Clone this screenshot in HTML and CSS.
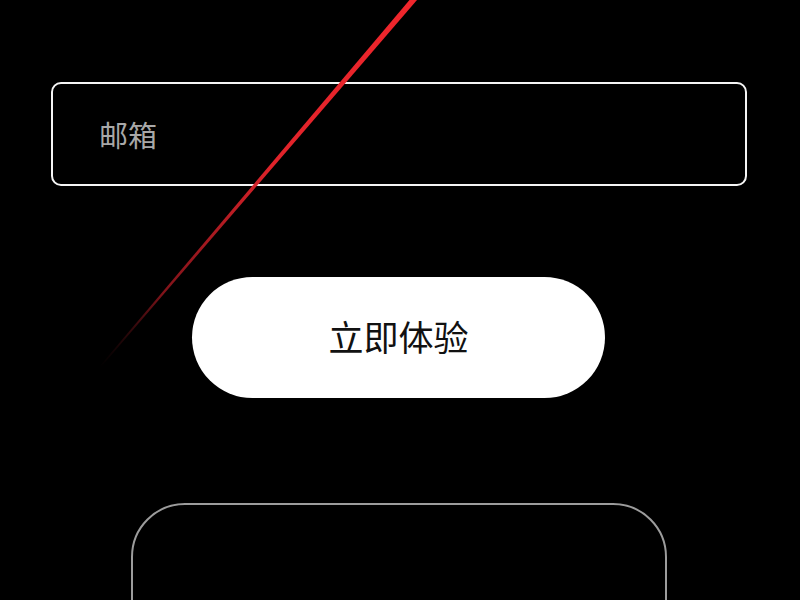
FILE: index.html
```html
<!DOCTYPE html>
<html lang="zh">
<head>
<meta charset="utf-8">
<link rel="stylesheet" href="styles.css">
</head>
<body>
<div class="page">
  <div class="field"><input class="email" type="text" placeholder="邮箱"></div>
  <button class="cta">立即体验</button>
  <div class="panel"></div>
</div>
<svg class="laser" width="800" height="600" viewBox="0 0 800 600">
  <defs>
    <linearGradient id="lg" x1="415" y1="0" x2="100" y2="367" gradientUnits="userSpaceOnUse">
      <stop offset="0" stop-color="#f0262c"/>
      <stop offset="0.45" stop-color="#e0232a"/>
      <stop offset="0.8" stop-color="#a01820" stop-opacity="0.8"/>
      <stop offset="1" stop-color="#501014" stop-opacity="0"/>
    </linearGradient>
  </defs>
  <polygon points="409.5,0 417,0 101,367 99,367" fill="url(#lg)"/>
</svg>
</body>
</html>
```
FILE: styles.css
```css
html, body {
  margin: 0;
  padding: 0;
  background: #000;
  width: 800px;
  height: 600px;
  overflow: hidden;
  font-family: "Noto Sans CJK SC", "Noto Sans", sans-serif;
}
.page {
  box-sizing: border-box;
  width: 800px;
  padding-top: 82px;
  padding-right: 3px;
  display: flex;
  flex-direction: column;
  align-items: center;
}
.field {
  box-sizing: border-box;
  width: 696px;
  height: 104px;
  align-self: flex-start;
  margin-left: 51px;
  border: 2px solid #f5f5f5;
  border-radius: 10px;
  display: flex;
  align-items: center;
  padding-left: 46px;
}
.email {
  background: transparent;
  border: none;
  outline: none;
  color: #fff;
  font-family: inherit;
  font-size: 29px;
  width: 100%;
  padding: 0;
}
.email::placeholder {
  color: #a8a8a8;
}
.cta {
  margin-top: 91px;
  width: 413px;
  height: 121px;
  border: none;
  border-radius: 61px;
  background: #fff;
  color: #111;
  font-family: inherit;
  font-size: 35px;
  padding: 0 0 4px;
}
.panel {
  box-sizing: border-box;
  margin-top: 105px;
  width: 536px;
  height: 220px;
  border: 2px solid #9c9c9c;
  border-radius: 54px;
}
.laser {
  position: absolute;
  left: 0;
  top: 0;
  pointer-events: none;
}
```
